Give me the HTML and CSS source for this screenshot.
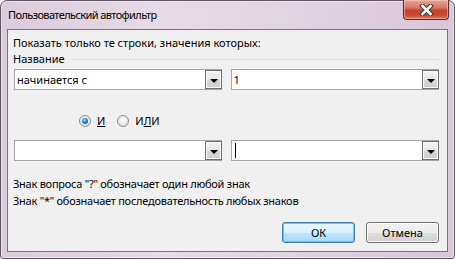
FILE: index.html
```html
<!DOCTYPE html>
<html lang="ru">
<head>
  <meta charset="utf-8">
  <link rel="stylesheet" href="styles.css">
  <title>Пользовательский автофильтр</title>
</head>
<body>
  <div class="window">
    <div class="titlebar">
      <span class="title">Пользовательский автофильтр</span>
      <div class="close">
        <svg width="15" height="12" viewBox="0 0 15 12">
          <path d="M3.5 2 L11.5 10 M11.5 2 L3.5 10" stroke="#3a3a3a" stroke-width="4.6" stroke-linecap="square" fill="none"/>
          <path d="M3.5 2 L11.5 10 M11.5 2 L3.5 10" stroke="#ffffff" stroke-width="2.6" stroke-linecap="square" fill="none"/>
        </svg>
      </div>
    </div>

    <div class="client">
      <p class="caption">Показать только те строки, значения которых:</p>
      <div class="group">
        <span>Название</span>
        <span class="etch"></span>
      </div>

      <div class="row">
        <div class="combo combo-left"><span class="value">начинается с</span><span class="drop"></span></div>
        <div class="combo combo-right"><span class="value">1</span><span class="drop"></span></div>
      </div>

      <div class="radios">
        <label class="radio"><span class="dot checked"></span><span><u>И</u></span></label>
        <label class="radio"><span class="dot"></span><span>И<u>Л</u>И</span></label>
      </div>

      <div class="row row-second">
        <div class="combo combo-left"><span class="value"></span><span class="drop"></span></div>
        <div class="combo combo-right"><span class="value"><span class="caret"></span></span><span class="drop"></span></div>
      </div>

      <div class="hints">
        <p class="hint">Знак вопроса "?" обозначает один любой знак</p>
        <p class="hint">Знак "*" обозначает последовательность любых знаков</p>
      </div>

      <div class="buttons">
        <button class="btn btn-default">ОК</button>
        <button class="btn">Отмена</button>
      </div>
    </div>
  </div>
</body>
</html>
```

FILE: styles.css
```css
body {
  margin: 0;
  font-family: "Noto Sans", "DejaVu Sans", sans-serif;
  font-size: 11px;
  color: #000;
}

.window {
  width: 455px;
  height: 259px;
  box-sizing: border-box;
  border: 1px solid #5e5462;
  border-radius: 7px 7px 3px 3px;
  padding: 0 6px 6px 6px;
  display: flex;
  flex-direction: column;
  background: linear-gradient(90deg, #dccbdc 0%, #e6dbe6 35%, #e2d5e2 60%, #d9c6d9 100%);
  box-shadow: inset 0 0 0 1px rgba(255, 255, 255, 0.45);
}

.titlebar {
  height: 28px;
  display: flex;
  justify-content: space-between;
  align-items: center;
}

.title {
  padding-left: 1px;
  line-height: 16px;
  margin-top: -1px;
  letter-spacing: -0.6px;
}

.close {
  align-self: flex-start;
  margin-top: -1px;
  margin-right: -1px;
  width: 44px;
  height: 19px;
  border: 1px solid #5b2a26;
  border-top: none;
  border-radius: 0 0 4px 4px;
  background: linear-gradient(180deg, #e8a696 0%, #d87665 40%, #c5422c 55%, #c84a32 80%, #dd7a5c 100%);
  box-shadow: inset 0 0 0 1px rgba(255, 210, 200, 0.5);
  display: flex;
  justify-content: center;
  align-items: center;
}

.client {
  flex: 1;
  border: 1px solid #76727a;
  background: #f0f0f0;
  padding: 0 8px 0 6px;
  display: flex;
  flex-direction: column;
}

.caption {
  margin: 5px 0 0 -1px;
  line-height: 16px;
}

.group {
  display: flex;
  align-items: center;
  line-height: 16px;
  margin-left: -1px;
}

.etch {
  flex: 1;
  margin: 1px 0 0 7px;
  border-top: 1px solid #d5dfe5;
}

.row {
  display: flex;
  gap: 9px;
  margin-top: 2px;
}

.row-second {
  margin-top: 11px;
}

.combo {
  height: 21px;
  box-sizing: border-box;
  border: 1px solid #a5a5a5;
  background: #fff;
  display: flex;
  align-items: stretch;
}

.combo-left {
  width: 209px;
}

.combo-right {
  width: 210px;
}

.value {
  flex: 1;
  padding-left: 2px;
  line-height: 19px;
  display: flex;
  align-items: center;
}

.caret {
  width: 1px;
  height: 15px;
  margin-left: 1px;
  background: #000;
}

.drop {
  width: 17px;
  box-sizing: border-box;
  border: 1px solid #6f6f6f;
  margin: 0 -1px 0 0;
  background: linear-gradient(180deg, #f3f3f3 0%, #e6e6e6 50%, #d6d6d6 51%, #cdcdcd 100%);
  box-shadow: inset 0 0 0 1px #fafafa;
  position: relative;
}

.drop::after {
  content: "";
  position: absolute;
  left: 4px;
  top: 8px;
  border-left: 4px solid transparent;
  border-right: 4px solid transparent;
  border-top: 4px solid #000;
}

.radios {
  display: flex;
  align-items: center;
  gap: 12px;
  margin-top: 23px;
  padding-left: 65px;
  line-height: 16px;
}

.radio {
  display: flex;
  align-items: center;
  gap: 6px;
}

.dot {
  width: 12px;
  height: 12px;
  box-sizing: border-box;
  border-radius: 50%;
  border: 1px solid #8c8f94;
  background: radial-gradient(circle at 50% 40%, #ffffff 0%, #e9e9e9 55%, #cfcfcf 100%);
  display: flex;
  justify-content: center;
  align-items: center;
}

.dot.checked::after {
  content: "";
  width: 6px;
  height: 6px;
  border-radius: 50%;
  background: radial-gradient(circle at 40% 35%, #9fdcff 0%, #2b7fc4 45%, #123f78 100%);
}

.hints {
  margin-top: 14px;
  margin-left: -1px;
  letter-spacing: -0.25px;
}

.hint {
  margin: 0;
  line-height: 17px;
}

.buttons {
  display: flex;
  justify-content: flex-end;
  gap: 11px;
  margin-top: 13px;
}

.btn {
  width: 73px;
  height: 21px;
  box-sizing: border-box;
  font: inherit;
  color: #000;
  padding: 0;
  border: 1px solid #707070;
  border-radius: 3px;
  background: linear-gradient(180deg, #f2f2f2 0%, #ebebeb 50%, #dddddd 51%, #cfcfcf 100%);
  box-shadow: inset 0 0 0 1px #fbfbfb;
}

.btn-default {
  border-color: #3c7fb1;
  background: linear-gradient(180deg, #eaf6fd 0%, #d9f0fc 50%, #bee6fd 51%, #a7d9f5 100%);
  box-shadow: inset 0 0 0 1px #48d0f6;
}
```
